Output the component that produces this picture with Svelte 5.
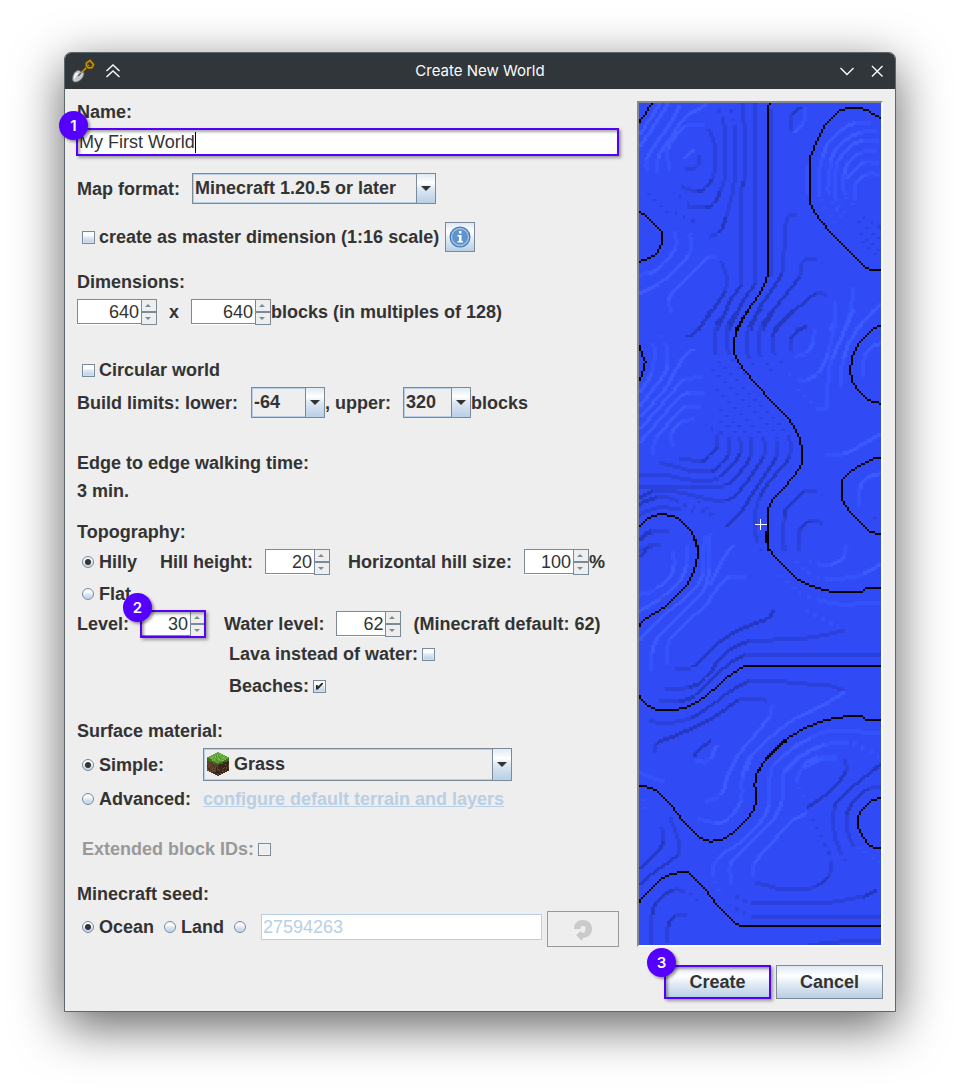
<script lang="ts">
    let name = 'My First World';
    let format = 'Minecraft 1.20.5 or later';
    let width = 640;
    let length = 640;
    let hillHeight = 20;
    let hillSize = 100;
    let level = 30;
    let waterLevel = 62;
    let topography = 'hilly';
    let surface = 'simple';
    let seedType = 'ocean';
    let seed = '27594263';
    let master = false;
    let circular = false;
    let lava = false;
    let beaches = true;

    // The preview is 121 x 421 cells. Contours are kept in strips, six units to
    // a cell, with the y origin of every strip given in top.
    const COLS = 121;
    const ROWS = 421;
    const LEFT = 27;
    const strips = [
        {
            top: 39,
            shore: [
                '27,93 45,70 63,42',
                '417,42 411,50 411,300 411,560 390,610 355,660 320,718',
                '753,86 720,68 700,57 640,57 620,68 590,100 565,145 545,195 537,220 537,320 550,360 575,400 640,470 700,525 735,542 753,542',
                '27,368 50,378 85,413 94,430 94,465 85,485 60,503 27,513'
            ],
            dark: [
                '235,120 248,160 253,190 253,235 245,262 230,290 205,300 155,290',
                '258,50 275,90 283,135 283,260 270,300 250,340 225,350 175,345',
                '290,45 310,100 313,150 310,270 300,330 285,385 265,430 240,435',
                '333,42 340,120 342,270 333,290 330,580 300,630 260,718',
                '372,42 372,575 340,630 295,718',
                '417,60 417,560',
                '510,52 485,70 480,118',
                '495,370 472,375 462,440 455,545 430,590 390,650 358,718',
                '560,503 520,508 505,560 470,610 430,660 397,718',
                '585,612 560,606 520,635 480,670 440,718',
                '530,708 500,714',
                '270,515 285,560 283,600 250,655 205,718',
                '168,235 200,230 205,195',
                '150,320 200,350', '120,360 190,390', '40,300 110,370',
                '680,390 753,450', '680,420 745,480', '700,380 753,410', '690,450 745,510'
            ],
            light: [
                '27,130 60,80 85,42',
                '27,165 60,120 110,42',
                '45,240 47,210 80,150 120,95 145,45',
                '78,245 80,205 120,140 165,80 230,42',
                '115,240 110,180 130,140 165,108 220,100',
                '160,205 170,190 190,180',
                '133,425 133,475 100,520 60,545 27,550',
                '177,430 175,490 140,530 90,575 27,608',
                '258,495 230,500 190,540 140,590 115,630 120,665',
                '720,98 680,95 640,112 600,150 575,200 565,250 565,320 610,395',
                '735,120 690,125 640,150 600,210 590,300 630,380',
                '745,150 700,150 660,165 625,210 615,240 615,330 655,380',
                '735,182 690,185 655,215 640,250 640,310 670,350',
                '745,215 700,215 675,240 650,265',
                '745,250 710,250 675,280 670,330',
                '490,128 515,105 523,55',
                '530,225 530,310',
                '610,635 612,690 600,718',
                '665,595 660,660 640,718',
                '753,635 700,690 680,718'
            ]
        },
        {
            top: -621,
            shore: [
                '355,2 330,45 315,80 315,135 330,165 370,215 430,285 480,335 505,380 513,410 513,465 500,490 470,525 440,555 415,600 411,620 411,718',
                '753,50 735,53 700,85 675,125 663,165 663,200 675,230 710,266 753,280',
                '27,110 38,140 45,160 30,212',
                '753,440 715,452 670,477 640,505 638,570 655,600 690,640 720,663 753,673',
                '27,645 50,628 85,615 115,615 150,628 180,660 201,715'
            ],
            dark: [
                '240,2 205,55 170,80',
                '290,2 260,40 250,80 252,125 265,160 400,300 470,375 475,440 430,500 390,555 375,600 372,680',
                '325,2 295,40 287,80 290,120 305,150 340,195',
                '388,2 355,50 348,90 348,130 365,160',
                '425,2 395,45 383,90 385,130 420,180',
                '485,2 440,45 427,80 427,125 450,160',
                '530,45 500,60 480,85 480,118',
                '240,175 420,350 437,390 437,440 400,500 360,560 320,620 285,645',
                '260,240 385,365 398,390 398,440 370,485 330,540 290,570 250,568 150,545 70,540 27,560',
                '255,290 350,370 360,390 360,435 330,485 290,520 250,530 180,528 27,525',
                '265,330 315,365 325,385 327,430 300,470 265,500 240,508 160,505 100,490 27,492',
                '245,355 285,370 292,385 295,430 275,460 245,480 180,480 90,455',
                '258,380 258,410 240,435 215,448 150,443',
                '27,580 80,560 130,565 190,600',
                '27,610 90,590 150,595',
                '200,570 260,620', '150,570 240,610',
                '560,540 520,542 480,580 460,615 455,718',
                '575,635 540,630 510,655 503,718',
                '27,688 60,662 115,658',
                '27,718 80,703',
                '720,610 753,640'
            ],
            light: [
                '27,245 60,190 72,115 60,95',
                '27,285 90,205 108,170 107,110 90,70',
                '27,320 100,240 150,150 185,118',
                '27,355 110,260 160,210 215,198',
                '27,395 100,310 140,265 175,245 220,245',
                '65,430 75,385 120,330 160,290 210,285',
                '125,410 122,370 150,335 190,325',
                '495,135 525,130 545,100 550,60',
                '465,180 500,203 530,208 560,190 590,130 612,40 612,2',
                '490,230 540,280 560,295 585,295',
                '588,295 590,230 600,150 640,60 665,2',
                '632,225 635,150 670,70 725,2',
                '697,195 700,140 720,110 753,97',
                '590,430 640,430 700,400 753,370',
                '685,590 685,540 705,505 753,487'
            ]
        },
        {
            top: -1281,
            shore: [
                '411,0 411,40 425,70 455,105 510,150 560,172 600,183 700,183 705,177 753,177',
                '182,0 200,45 201,90 180,150 150,190 100,232 50,262 27,285',
                '27,500 45,520 80,537 150,537 200,518 245,485 290,445 340,412 370,405 753,405',
                '388,718 400,695 440,650 500,610 560,580 600,568 640,561 700,561 705,567 753,567'
            ],
            dark: [
                '27,78 60,45 90,42',
                '27,25 60,5 110,2',
                '372,2 380,40 395,80',
                '455,2 460,60',
                '505,2 505,55',
                '415,225 425,240 415,262 370,278 320,300 270,330 230,370 180,410 135,413',
                '640,298 590,310 520,322 450,326 360,330 300,355 260,395 230,440 180,468 110,473',
                '753,372 350,372 300,395 250,440 200,490 150,510 90,508',
                '640,478 600,465 540,460 440,450 360,450 300,480 240,525 180,560 120,575 60,572',
                '405,508 380,503 330,505 270,545 200,585 130,615 75,640 70,665',
                '240,632 205,655 192,680',
                '753,700 725,718'
            ],
            light: [
                '27,190 70,180 110,150 128,110 128,65',
                '27,240 90,205 140,160 165,110 165,50',
                '27,330 50,300 120,240 180,190 215,130 220,20',
                '62,420 62,370 80,320 150,255 210,190 235,120 237,10',
                '110,400 115,330 160,285 220,230 250,185 295,140 345,140',
                '305,45 275,90 240,160',
                '530,80 560,95 600,102 640,80 645,50',
                '490,90 530,120 580,140 660,140 700,130 753,100',
                '450,140 500,180 560,205 640,220 753,217',
                '520,235 625,285',
                '640,485 580,520 500,560 430,610 370,670 345,718',
                '425,530 415,560 370,620 320,680 300,718',
                '753,605 600,600 540,620 470,665 420,718',
                '730,660 660,635 590,640 520,670 470,718',
                '620,685 580,682 540,700 520,715',
                '200,690 235,690 255,645'
            ]
        },
        {
            top: -1911,
            shore: [
                '465,3 430,35 390,85 376,120 374,200 350,240 310,275 265,300 220,300 190,275 155,235 115,185 80,152 27,136',
                '753,173 720,185 695,210 683,240 690,275 715,312 753,327',
                '27,487 45,460 90,420 140,400 180,400 205,425 260,495 300,535 345,560 753,560'
            ],
            dark: [
                '640,60 645,95 620,130 580,165 535,195',
                '753,70 700,110 640,160 612,200 608,270 625,330 655,380',
                '753,138 710,145 670,180 650,220 648,270 665,320',
                '545,235 575,300 597,360 595,405 560,435 510,445 450,445 380,425',
                '735,448 700,465 600,485 365,485 310,465',
                '753,527 365,527 310,500',
                '753,600 650,600 540,612',
                '27,385 70,345 97,305 95,270 80,250',
                '27,432 80,390 140,345 145,310 120,235',
                '62,610 62,530 80,480 125,450 160,450 210,490',
                '108,605 110,560 130,525 165,520'
            ],
            light: [
                '320,50 290,110 270,165 225,180',
                '410,2 360,50 335,110 330,180 300,230 260,245 205,235',
                '500,10 430,70 415,130 415,190 380,260 320,310 260,355 245,410 265,450',
                '560,15 490,60 460,100 455,180 420,250 350,320 300,370 300,430',
                '525,180 500,130 515,80 560,50 620,50',
                '365,410 370,370 420,310 470,255 530,215',
                '660,5 745,45',
                '27,95 100,120',
                '30,175 50,220',
                '680,320 753,372'
            ]
        }
    ];

    const colours = {
        darkSoft: '#2b41dc',
        dark: '#2438c2',
        lightSoft: '#3552ff',
        light: '#3b5bff',
        shore: '#000000'
    };

    function trace(line: string, top: number) {
        const points = line.split(' ').map(p => p.split(',').map(Number)).map(([x, y]) => [(x - LEFT) / 6, (y - top) / 6]);
        // Unit direction of the curve in each point
        const headings = points.map((p, i) => {
            const a = points[i - 1] ?? p;
            const b = points[i + 1] ?? p;
            const size = Math.hypot(b[0] - a[0], b[1] - a[1]);
            return [(b[0] - a[0]) / size, (b[1] - a[1]) / size];
        });
        const cells: number[][] = [];
        for (let i = 0; i < points.length - 1; i++) {
            const p = points[i];
            const q = points[i + 1];
            const dx = q[0] - p[0];
            const dy = q[1] - p[1];
            const span = Math.hypot(dx, dy);
            const steps = Math.ceil(span * 4);
            // Long runs stay straight, only the bends are rounded
            const straight = span > 15;
            for (let s = 0; s <= steps; s++) {
                const t = s / steps;
                const ease = t * t * (3 - 2 * t);
                const leave = t * (1 - t) * (1 - t) * span;
                const arrive = t * t * (t - 1) * span;
                const at = (k: number) => straight
                    ? p[k] + (q[k] - p[k]) * t
                    : p[k] + (q[k] - p[k]) * ease + headings[i][k] * leave + headings[i + 1][k] * arrive;
                const x = Math.floor(at(0));
                const y = Math.floor(at(1));
                const last = cells[cells.length - 1];
                if (last && last[0] === x && last[1] === y) continue;
                // Drop the corner cell where the line steps diagonally
                const prior = cells[cells.length - 2];
                if (prior && Math.abs(prior[0] - x) === 1 && Math.abs(prior[1] - y) === 1) cells.pop();
                cells.push([x, y, dx, dy]);
            }
        }
        return cells;
    }

    function buildMap() {
        const cells = new Map<number, string>();
        const put = (x: number, y: number, kind: string) => {
            if (x >= 0 && x < COLS && y >= 0 && y < ROWS) cells.set(y * COLS + x, kind);
        };
        for (const kind of ['dark', 'light'] as const) {
            for (const strip of strips) {
                for (const line of strip[kind]) {
                    for (const [x, y, dx, dy] of trace(line, strip.top)) {
                        const ax = Math.abs(dx);
                        const ay = Math.abs(dy);
                        const slanted = Math.min(ax, ay) > Math.max(ax, ay) * 0.35;
                        // Slopes running down to the right only show as dashes
                        if (slanted && dx * dy > 0 && (x + y) % 6 > 1) continue;
                        const shade = slanted && dx * dy < 0 ? kind : kind + 'Soft';
                        put(x, y, shade);
                        if (ay > ax * 0.7) put(x + 1, y, shade);
                        else put(x, y + 1, shade);
                    }
                }
            }
        }
        for (const strip of strips) {
            for (const line of strip.shore) {
                for (const [x, y] of trace(line, strip.top)) put(x, y, 'shore');
            }
        }
        const paths: Record<string, string> = {};
        for (const [key, kind] of cells) {
            paths[kind] = (paths[kind] ?? '') + `M${key % COLS} ${Math.floor(key / COLS)}h1v1h-1z`;
        }
        return Object.entries(paths).map(([kind, d]) => ({fill: colours[kind], d}));
    }

    const layers = buildMap();

    // Speckles on the faces of the grass block
    const turf = ['#7cb84c', '#4c8a2c', '#8cc85c', '#5a9c34'];
    const soil = ['#6b4a30', '#3a2618', '#74523a', '#342216'];
    const specks: { x: number, y: number, fill: string }[] = [];
    for (let y = 0; y < 24; y++) {
        for (let x = 0; x < 22; x++) {
            const n = (x * 37 + y * 59 + x * y * 13) % 11;
            const off = Math.abs(x - 10.5) / 2;
            if (n > 3) continue;
            if (y > off && y < 11 - off) specks.push({x, y, fill: turf[n]});
            else if (y > 15 - off && y < 23 - off) specks.push({x, y, fill: soil[n]});
        }
    }
</script>

<svelte:head>
    <title>Create New World</title>
</svelte:head>

<div class="desktop">
    <div class="window" role="dialog" aria-labelledby="title">
        <header>
            <svg class="shovel" viewBox="0 0 24 24" width="24" height="24" aria-hidden="true">
                <path d="M9 15 18 6" stroke="#4a3600" stroke-width="3"/>
                <path d="M9 15 18 6" stroke="#c79a10" stroke-width="1.6"/>
                <path d="M15.500 4 19 1.500l3.500 4-1.500 3-3.500.5-2-2z" stroke="#5a4200" stroke-width="3"/>
                <path d="M15.500 4 19 1.500l3.500 4-1.500 3-3.500.5-2-2z" stroke="#c79a10" stroke-width="1.500"/>
                <path d="M6.500 11.500c1.500-.5 2.500.5 3.500 1.500l3 .5c0 5-3.500 8.500-7.500 9.500-2.500.4-4-.5-4-3 0-4 2-7.500 5-8.500z" fill="#c8c8c8" stroke="#66696b" stroke-width=".8"/>
                <path d="M5.500 13.500c-2.500 2-3 5-2.500 7.500 1-3 3-5 5-6z" fill="#f8f8f8"/>
                <path d="m7 17 3-3" stroke="#555" stroke-width="1.300"/>
            </svg>
            <button class="tool" title="Shade">
                <svg viewBox="0 0 16 16" width="16" height="16" aria-hidden="true"><path d="m1.500 8 6.500-6 6.500 6m-13 6L8 8l6.500 6"/></svg>
            </button>
            <h1 id="title">Create New World</h1>
            <button class="tool" title="Minimize">
                <svg viewBox="0 0 16 16" width="16" height="16" aria-hidden="true"><path d="m1.500 5 6.500 6.500L14.500 5"/></svg>
            </button>
            <button class="tool" title="Close">
                <svg viewBox="0 0 16 16" width="16" height="16" aria-hidden="true"><path d="m3 3 10.500 10.500m0-10.500L3 13.500"/></svg>
            </button>
        </header>

        <main>
            <form id="world" on:submit|preventDefault>
                <label for="name">Name:</label>
                <div class="marked name">
                    <input class="text" id="name" bind:value={name}>
                    <span class="caret"></span>
                    <span class="marker"><b>1</b></span>
                </div>

                <div class="row wide">
                    <label for="format">Map format:</label>
                    <span class="combo format">
                        <select id="format" bind:value={format}>
                            <option>Minecraft 1.20.5 or later</option>
                            <option>Minecraft 1.18 or later</option>
                        </select>
                    </span>
                </div>

                <div class="row wide">
                    <label class="option"><input type="checkbox" bind:checked={master}>create as master dimension (1:16 scale)</label>
                    <button type="button" class="info" title="More information">
                        <svg viewBox="0 0 24 24" width="24" height="24" aria-hidden="true">
                            <circle cx="12" cy="12" r="10.500" fill="#4a7ab4"/>
                            <circle cx="12" cy="12" r="8.500" fill="#5f93cc" stroke="#a4c4e4" stroke-width="1.300"/>
                            <path d="M11 6h2.500v2.500H11zM9.500 10h4v6H15v1.500H9.500V16H11v-4.500H9.500z" fill="#fff"/>
                        </svg>
                    </button>
                </div>

                <div class="heading">Dimensions:</div>
                <div class="row">
                    <span class="spinner large">
                        <input type="number" aria-label="Width" step="128" bind:value={width}>
                        <button type="button" aria-label="Increase width"></button>
                        <button type="button" aria-label="Decrease width"></button>
                    </span>
                    <span class="times">x</span>
                    <span class="spinner large">
                        <input type="number" aria-label="Length" step="128" bind:value={length}>
                        <button type="button" aria-label="Increase length"></button>
                        <button type="button" aria-label="Decrease length"></button>
                    </span>
                    <span>blocks (in multiples of 128)</span>
                </div>

                <label class="option section"><input type="checkbox" bind:checked={circular}>Circular world</label>
                <div class="row">
                    <label for="lower">Build limits: lower:</label>
                    <span class="combo lower"><select id="lower"><option>-64</option></select></span>
                    <label for="upper">, upper:</label>
                    <span class="combo upper"><select id="upper"><option>320</option></select></span>
                    <span>blocks</span>
                </div>

                <div class="section">Edge to edge walking time:</div>
                <div class="row">3 min.</div>

                <div class="heading">Topography:</div>
                <div class="row">
                    <label class="option"><input type="radio" value="hilly" bind:group={topography}>Hilly</label>
                    <label class="hill" for="hill-height">Hill height:</label>
                    <span class="spinner">
                        <input type="number" id="hill-height" bind:value={hillHeight}>
                        <button type="button" aria-label="Increase hill height"></button>
                        <button type="button" aria-label="Decrease hill height"></button>
                    </span>
                    <label class="next" for="hill-size">Horizontal hill size:</label>
                    <span class="spinner">
                        <input type="number" id="hill-size" bind:value={hillSize}>
                        <button type="button" aria-label="Increase hill size"></button>
                        <button type="button" aria-label="Decrease hill size"></button>
                    </span>
                    <span>%</span>
                </div>
                <div class="row flat">
                    <label class="option"><input type="radio" value="flat" bind:group={topography}>Flat</label>
                </div>
                <div class="row">
                    <label for="level">Level:</label>
                    <span class="spinner marked">
                        <input type="number" id="level" bind:value={level}>
                        <button type="button" aria-label="Increase level"></button>
                        <button type="button" aria-label="Decrease level"></button>
                        <span class="marker"><b>2</b></span>
                    </span>
                    <label class="next" for="water">Water level:</label>
                    <span class="spinner">
                        <input type="number" id="water" bind:value={waterLevel}>
                        <button type="button" aria-label="Increase water level"></button>
                        <button type="button" aria-label="Decrease water level"></button>
                    </span>
                    <span class="default">(Minecraft default: 62)</span>
                </div>
                <div class="extras">
                    <label class="option trailing">Lava instead of water:<input type="checkbox" bind:checked={lava}></label>
                    <label class="option trailing">Beaches:<input type="checkbox" bind:checked={beaches}></label>
                </div>

                <div class="group">Surface material:</div>
                <div class="materials">
                    <label class="option"><input type="radio" value="simple" bind:group={surface}>Simple:</label>
                    <span class="combo material">
                        <select aria-label="Surface material"><option>Grass</option></select>
                        <svg viewBox="0 0 22 24" width="22" height="24" shape-rendering="crispEdges" aria-hidden="true">
                            <path d="M11 0 22 5.500v13L11 24 0 18.500v-13z" fill="#5a3d28"/>
                            <path d="M11 11 22 5.500v13L11 24z" fill="#3c281a"/>
                            <path d="M0 5.500 11 11 22 5.500V9l-2-.5-1 2-2-1-2 3-2-1-2 2-2-2-2 1-2-3-2 1-2-2-2 .5z" fill="#3c7020"/>
                            <path d="M11 0 22 5.500 11 11 0 5.500z" fill="#66a83c"/>
                            {#each specks as s}
                                <rect x={s.x} y={s.y} width="1" height="1" fill={s.fill}/>
                            {/each}
                        </svg>
                    </span>
                    <label class="option"><input type="radio" value="advanced" bind:group={surface}>Advanced:</label>
                    <a href="#terrain">configure default terrain and layers</a>
                </div>

                <label class="option trailing ids">Extended block IDs:<input type="checkbox" disabled></label>

                <div class="group">Minecraft seed:</div>
                <div class="row seed">
                    <label class="option"><input type="radio" value="ocean" bind:group={seedType}>Ocean</label>
                    <label class="option"><input type="radio" value="land" bind:group={seedType}>Land</label>
                    <label class="option"><input type="radio" value="custom" aria-label="Custom seed" bind:group={seedType}></label>
                    <input class="text" aria-label="Seed" disabled bind:value={seed}>
                    <button type="button" class="random" title="Random seed" disabled>
                        <svg viewBox="0 0 22 24" width="22" height="24" aria-hidden="true">
                            <path d="M2 12C2 6 6 3 11 3c5.500 0 9 3.500 9 9 0 5-3.500 8.500-9 9l-1 3-6-6 5-4 1 2c2.500 0 3.500-1.500 3.500-4S13 9 11 9s-2.500 1-2.500 3z" fill="#cacaca"/>
                        </svg>
                    </button>
                </div>
            </form>

            <aside>
                <svg class="preview" viewBox="0 0 {COLS} {ROWS}" shape-rendering="crispEdges" role="img" aria-label="World preview">
                    <rect width={COLS} height={ROWS} fill="#304af5"/>
                    {#each layers as layer}
                        <path d={layer.d} fill={layer.fill}/>
                    {/each}
                    <path d="M58 210.500h6M60.750 208v5.500" stroke="#fff" stroke-width=".5"/>
                </svg>
                <div class="actions">
                    <button class="action marked" form="world">Create<span class="marker"><b>3</b></span></button>
                    <button type="button" class="action">Cancel</button>
                </div>
            </aside>
        </main>
    </div>
</div>

<style>
    :global(body) {
        background: #fff;
    }

    .desktop {
        padding: 52px 64px 76px;
        font: bold 18px/22px "Liberation Sans", Arial, sans-serif;
        color: #333;
    }

    .window {
        border: 1px solid #5f676e;
        border-radius: 7px 7px 0 0;
        background: #eee;
        box-shadow: 0 14px 50px rgba(0, 0, 0, 0.62);
    }

    header {
        display: flex;
        align-items: center;
        gap: 14px;
        height: 36px;
        padding: 0 10px 0 6px;
        border-radius: 6px 6px 0 0;
        background: #31363b;
    }

    h1 {
        flex: 1;
        margin: 0;
        font: 15px/20px Inter, "Noto Sans", sans-serif;
        color: #fcfcfc;
        text-align: center;
    }

    .shovel {
        fill: none;
        margin-right: -4px;
    }

    .tool {
        display: flex;
        padding: 0;
        border: 0;
        background: none;
    }

    .tool path {
        fill: none;
        stroke: #fcfcfc;
        stroke-width: 1.4;
    }

    main {
        display: flex;
        gap: 18px;
        padding: 12px;
    }

    form {
        flex: 1;
        display: flex;
        flex-direction: column;
        gap: 6px;
    }

    .row {
        display: flex;
        align-items: center;
    }

    .wide {
        margin-top: 12px;
    }

    .heading {
        margin-top: 13px;
    }

    .section {
        margin-top: 28px;
    }

    .group {
        margin-top: 17px;
    }

    .flat {
        margin-top: 2px;
    }

    input, select, button {
        box-sizing: border-box;
        margin: 0;
        border-radius: 0;
        font: inherit;
        color: inherit;
        outline: none;
    }

    .marked {
        position: relative;
    }

    .marker {
        position: absolute;
        inset: -1px 0 -1px -1px;
        border: 2px solid #50f;
        box-shadow: 2px 2px 3px rgba(0, 0, 0, 0.35), inset 2px 2px 3px rgba(0, 0, 0, 0.35);
        pointer-events: none;
    }

    .marker b {
        position: absolute;
        left: -19px;
        top: -19px;
        width: 29px;
        height: 29px;
        border-radius: 50%;
        background: #50f;
        box-shadow: 2px 2px 3px rgba(0, 0, 0, 0.4);
        font: 600 15px/29px Inter, sans-serif;
        color: #fff;
        text-align: center;
    }

    .text {
        height: 26px;
        padding: 0 1px;
        border: 1px solid #7a8a99;
        background: #fff;
        font-weight: normal;
    }

    .text:disabled {
        border-color: #b8cfe5;
        color: #b8cfe5;
    }

    .name {
        display: flex;
    }

    .name .text {
        flex: 1;
    }

    .caret {
        position: absolute;
        left: 118px;
        top: 3px;
        bottom: 2px;
        border-left: 1px solid #000;
    }

    .combo {
        position: relative;
        display: flex;
    }

    .combo select {
        width: 100%;
        height: 31px;
        padding: 0 20px 2px 2px;
        border: 1px solid #7a8a99;
        background: #eee;
        box-shadow: inset 0 0 0 1px #b8cfe5;
        appearance: none;
    }

    .combo::before {
        content: "";
        position: absolute;
        top: 1px;
        right: 1px;
        bottom: 1px;
        width: 18px;
        border-left: 1px solid #7a8a99;
        background: linear-gradient(#e0eaf4, #fff 30%, #dde8f3 50%, #b8cfe5);
        pointer-events: none;
    }

    .combo::after {
        content: "";
        position: absolute;
        right: 5px;
        top: calc(50% - 3px);
        border: 5px solid transparent;
        border-top-color: #333;
        border-bottom: 0;
        pointer-events: none;
    }

    .format {
        width: 244px;
        margin-left: 12px;
    }

    .lower {
        width: 74px;
        margin-left: 13px;
    }

    .upper {
        width: 68px;
        margin-left: 12px;
    }

    .option {
        display: flex;
        align-items: center;
    }

    input[type=checkbox], input[type=radio] {
        position: relative;
        width: 13px;
        height: 13px;
        margin: 0 4px 0 5px;
        border: 1px solid #7a8a99;
        background: linear-gradient(#f4f8fb, #fff 30%, #dde8f3 50%, #b8cfe5);
        box-shadow: inset 0 0 0 1px rgba(255, 255, 255, 0.3);
        appearance: none;
    }

    input[type=radio] {
        width: 12px;
        height: 12px;
        margin: 0 5px;
        border-radius: 50%;
    }

    input[type=radio]:checked::before {
        content: "";
        position: absolute;
        inset: 2px;
        border-radius: 50%;
        background: #333;
    }

    input[type=checkbox]:checked::before {
        content: "";
        position: absolute;
        inset: 2px;
        background: #222;
        clip-path: polygon(0 35%, 25% 35%, 25% 60%, 85% 0, 100% 0, 100% 22%, 25% 100%, 0 100%);
    }

    input[type=checkbox]:disabled {
        background: #eee;
    }

    .trailing input[type=checkbox] {
        margin: 0 0 0 4px;
    }

    .info {
        display: flex;
        align-items: center;
        justify-content: center;
        width: 30px;
        height: 30px;
        margin-left: 6px;
        padding: 0;
        border: 1px solid #7a8a99;
        background: linear-gradient(#dde8f3, #fff 30%, #dde8f3 60%, #b8cfe5);
    }

    .spinner {
        display: grid;
        grid-template-columns: 1fr 16px;
        grid-template-rows: 13px 13px;
        width: 65px;
        margin-left: 12px;
    }

    .large {
        width: 80px;
    }

    .large:first-child {
        margin-left: 0;
    }

    .spinner input {
        grid-row: span 2;
        width: 100%;
        height: 25px;
        padding: 1px 2px 0;
        border: 1px solid #7a8a99;
        border-right: 0;
        background: #fff;
        box-shadow: 0 1px #fff;
        font-weight: normal;
        text-align: right;
        appearance: textfield;
    }

    .spinner input::-webkit-inner-spin-button {
        display: none;
    }

    .spinner button {
        display: flex;
        align-items: center;
        justify-content: center;
        padding: 0 3px 0 0;
        border: 1px solid #7a8a99;
        background: #eee;
    }

    .spinner button::before {
        content: "";
        border: 3px solid transparent;
        border-top: 0;
        border-bottom-color: #7a8a99;
    }

    .spinner button:nth-of-type(2)::before {
        border-top: 3px solid #7a8a99;
        border-bottom: 0;
    }

    .times, .default {
        margin-left: 12px;
    }

    .hill {
        margin-left: 23px;
    }

    .next {
        margin-left: 18px;
    }

    .extras {
        display: flex;
        flex-direction: column;
        gap: 10px;
        padding-left: 152px;
    }

    .materials {
        display: grid;
        grid-template-columns: max-content 1fr;
        gap: 7px 12px;
        align-items: center;
    }

    .material {
        max-width: 309px;
    }

    .material select {
        height: 33px;
        padding-left: 30px;
    }

    .material svg {
        position: absolute;
        left: 4px;
        top: 4px;
    }

    a {
        color: #b8cfe5;
    }

    .ids {
        margin-top: 22px;
        padding-left: 5px;
        color: #999;
    }

    /* The random button hangs a little below the fields beside it */
    .seed {
        gap: 5px;
        height: 32px;
    }

    .seed .text {
        flex: 1;
        min-width: 0;
        margin-left: 5px;
    }

    .random {
        display: flex;
        align-self: flex-start;
        align-items: center;
        justify-content: center;
        width: 72px;
        height: 36px;
        padding: 0;
        border: 1px solid #999;
        background: #eee;
    }

    aside {
        display: flex;
        flex-direction: column;
        gap: 18px;
    }

    .preview {
        display: block;
        width: 242px;
        border: 2px solid;
        border-color: #888 #fff #fff #888;
    }

    .actions {
        display: flex;
        justify-content: flex-end;
        gap: 5px;
    }

    .action {
        width: 107px;
        height: 34px;
        padding: 0;
        border: 1px solid #7a8a99;
        background: linear-gradient(#dde8f3, #fff 30%, #dde8f3 60%, #b8cfe5);
    }

    .action .marker {
        inset: -1px;
    }
</style>
